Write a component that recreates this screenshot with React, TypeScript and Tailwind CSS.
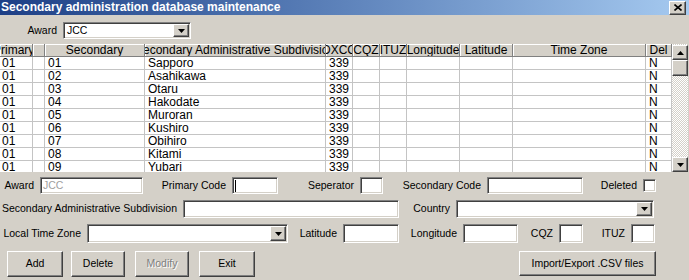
import React from "react";

const sunken =
  "bg-white border border-t-[#808080] border-l-[#808080] border-b-white border-r-white shadow-[inset_1px_1px_0_#404040,inset_-1px_-1px_0_#d4d0c8]";
const raised =
  "bg-[#d4d0c8] border border-t-white border-l-white border-b-[#404040] border-r-[#404040] shadow-[inset_-1px_-1px_0_#808080]";

const cols = [
  { w: "w-[33px]", head: "Primary", left: true },
  { w: "w-[12px]", head: "" },
  { w: "w-[100px]", head: "Secondary" },
  { w: "w-[181px]", head: "Secondary Administrative Subdivision" },
  { w: "w-[27px]", head: "DXCC" },
  { w: "w-[27px]", head: "CQZ" },
  { w: "w-[27px]", head: "ITUZ" },
  { w: "w-[53px]", head: "Longitude" },
  { w: "w-[53px]", head: "Latitude" },
  { w: "w-[133px]", head: "Time Zone" },
  { w: "w-[26px]", head: "Del" },
];

const names = ["Sapporo", "Asahikawa", "Otaru", "Hakodate", "Muroran", "Kushiro", "Obihiro", "Kitami", "Yubari"];

function Arrow({ up = false, dim = false }: { up?: boolean; dim?: boolean }) {
  return (
    <svg width="7" height="4" viewBox="0 0 7 4" className={up ? "rotate-180" : ""}>
      <polygon points="0,0 7,0 3.5,4" fill={dim ? "#808080" : "#000"} />
    </svg>
  );
}

function Combo({ w, h, text }: { w: string; h: string; text?: string }) {
  return (
    <div className={`${sunken} ${w} ${h} flex items-stretch p-[1px]`}>
      <div className="flex-1 pl-[2px] flex items-center text-[10.5px]">{text}</div>
      <div className={`${raised} w-[16px] flex items-center justify-center`}>
        <Arrow />
      </div>
    </div>
  );
}

function Label({ w, children }: { w: string; children: React.ReactNode }) {
  return <div className={`${w} pr-[6px] text-right whitespace-nowrap text-[10.5px]`}>{children}</div>;
}

function Btn({ w, h = "h-[26px]", children, off = false }: { w: string; h?: string; children: React.ReactNode; off?: boolean }) {
  return (
    <div
      className={`${raised} ${w} ${h} flex items-center justify-center text-[10.5px] ${
        off ? "text-[#808080] [text-shadow:1px_1px_0_#fff]" : ""
      }`}
    >
      {children}
    </div>
  );
}

export default function App() {
  return (
    <div className="w-[689px] h-[280px] overflow-hidden bg-[#d4d0c8] text-black font-['Liberation_Sans',Arial,sans-serif]">
      {/* title bar */}
      <div className="h-[15px] flex items-center justify-between bg-gradient-to-r from-[#1d3f86] to-[#a6caf0] pl-[1px] pr-[3px]">
        <span className="text-white font-bold text-[12px] leading-[15px] whitespace-nowrap">
          Secondary administration database maintenance
        </span>
        <div className={`${raised} w-[17px] h-[14px] flex items-center justify-center`}>
          <svg width="8" height="7" viewBox="0 0 8 7">
            <path d="M0.5 0.5 L7.5 6.5 M7.5 0.5 L0.5 6.5" stroke="#000" strokeWidth="1.6" />
          </svg>
        </div>
      </div>

      {/* award selector */}
      <div className="mt-[7px] h-[17px] flex items-center">
        <Label w="w-[63px]">Award</Label>
        <Combo w="w-[128px]" h="h-[17px]" text="JCC" />
      </div>

      {/* grid */}
      <div className="mt-[5px] h-[128px] flex overflow-hidden">
        <div className="w-[672px] flex flex-col">
          <div className="flex h-[13px] shrink-0">
            {cols.map((c, i) => (
              <div
                key={i}
                className={`${c.w} shrink-0 h-[13px] bg-[#d4d0c8] border-r border-b border-[#808080] shadow-[inset_1px_1px_0_#fff] overflow-hidden flex items-center whitespace-nowrap text-[12px] leading-[12px] ${
                  c.left ? "justify-start pl-0" : "justify-center px-[2px]"
                }`}
              >
                <span className={c.left ? "ml-[-7px]" : ""}>{c.head}</span>
              </div>
            ))}
          </div>
          {names.map((n, r) => {
            const vals = ["01", "", `0${r + 1}`, n, "339", "", "", "", "", "", "N"];
            return (
              <div key={r} className="flex h-[13px] shrink-0">
                {cols.map((c, i) => (
                  <div
                    key={i}
                    className={`${c.w} shrink-0 h-[13px] bg-white border-r border-b border-[#c4c4c4] overflow-hidden whitespace-nowrap text-[12px] leading-[12px] ${
                      i === 0 ? "pl-[2px]" : "pl-[3px]"
                    }`}
                  >
                    {vals[i]}
                  </div>
                ))}
              </div>
            );
          })}
        </div>
        {/* scrollbar */}
        <div className="w-[16px] flex flex-col bg-[image:repeating-conic-gradient(#d4d0c8_0%_25%,#ffffff_0%_50%)] bg-[length:2px_2px]">
          <div className={`${raised} h-[15px] mt-[1px] flex items-center justify-center`}>
            <Arrow up />
          </div>
          <div className={`${raised} h-[16px]`} />
          <div className="flex-1" />
          <div className={`${raised} h-[15px] flex items-center justify-center`}>
            <Arrow />
          </div>
        </div>
      </div>

      {/* row 1 */}
      <div className="mt-[5px] h-[17px] flex items-center">
        <Label w="w-[40px]">Award</Label>
        <div className={`${sunken} w-[103px] h-[17px] pl-[2px] flex items-center text-[10.5px] text-[#a0a0a0]`}>JCC</div>
        <Label w="w-[89px]">Primary Code</Label>
        <div className={`${sunken} w-[46px] h-[17px] flex items-center pl-[2px]`}>
          <div className="w-[1px] h-[12px] bg-black" />
        </div>
        <Label w="w-[82px]">Seperator</Label>
        <div className={`${sunken} w-[23px] h-[17px]`} />
        <Label w="w-[104px]">Secondary Code</Label>
        <div className={`${sunken} w-[96px] h-[17px]`} />
        <Label w="w-[60px]">Deleted</Label>
        <div className={`${sunken} w-[13px] h-[13px]`} />
      </div>

      {/* row 2 */}
      <div className="mt-[6px] h-[18px] flex items-center">
        <Label w="w-[183px]">Secondary Administrative Subdivision</Label>
        <div className={`${sunken} w-[216px] h-[18px]`} />
        <Label w="w-[57px]">Country</Label>
        <Combo w="w-[198px]" h="h-[18px]" />
      </div>

      {/* row 3 */}
      <div className="mt-[6px] h-[19px] flex items-center">
        <Label w="w-[87px]">Local Time Zone</Label>
        <Combo w="w-[201px]" h="h-[19px]" />
        <Label w="w-[55px]">Latitude</Label>
        <div className={`${sunken} w-[56px] h-[19px]`} />
        <Label w="w-[64px]">Longitude</Label>
        <div className={`${sunken} w-[55px] h-[19px]`} />
        <Label w="w-[41px]">CQZ</Label>
        <div className={`${sunken} w-[24px] h-[19px]`} />
        <Label w="w-[48px]">ITUZ</Label>
        <div className={`${sunken} w-[24px] h-[19px]`} />
      </div>

      {/* buttons */}
      <div className="mt-[8px] flex items-start pl-[7px]">
        <Btn w="w-[56px]">Add</Btn>
        <div className="w-[8px]" />
        <Btn w="w-[54px]">Delete</Btn>
        <div className="w-[10px]" />
        <Btn w="w-[54px]" off>
          Modify
        </Btn>
        <div className="w-[10px]" />
        <Btn w="w-[56px]">Exit</Btn>
        <div className="w-[264px]" />
        <Btn w="w-[137px]" h="h-[25px]">
          Import/Export .CSV files
        </Btn>
      </div>
    </div>
  );
}
